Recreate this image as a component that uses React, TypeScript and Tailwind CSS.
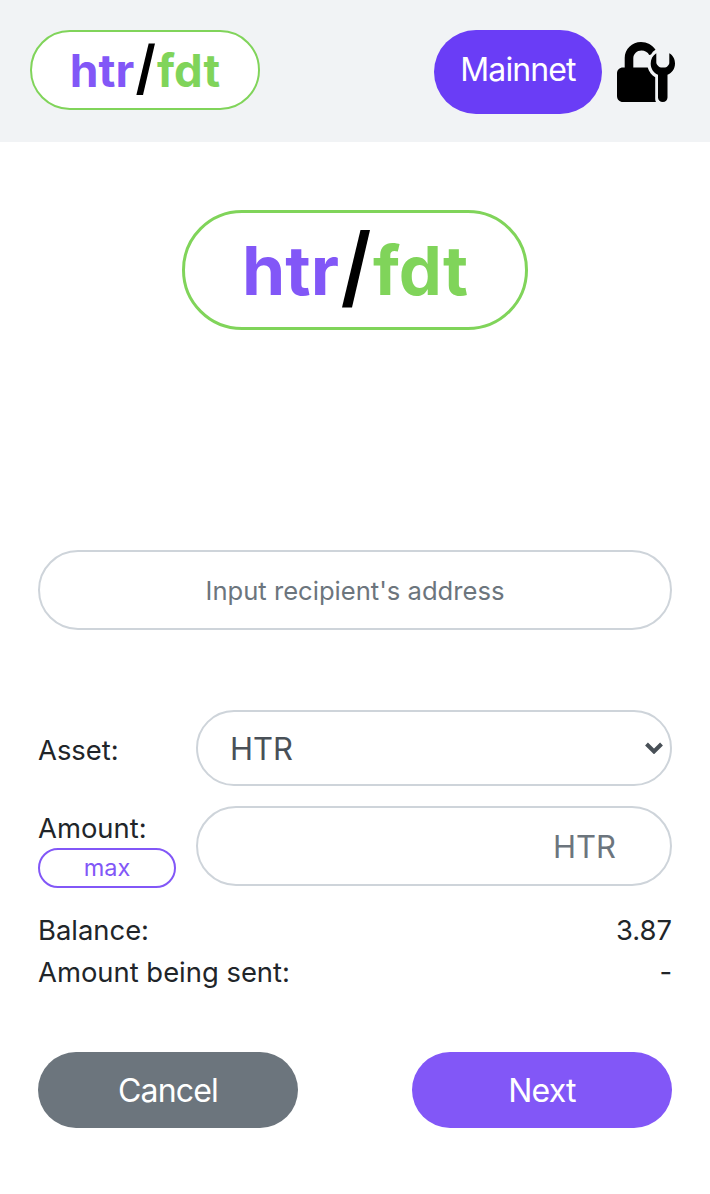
import { useState } from "react";

const ASSETS = ["HTR"];

function Logo({ className }: { className: string }) {
  return (
    <svg viewBox="0 0 346 120" className={className} role="img" aria-label="htr/fdt">
      <rect x="1.5" y="1.5" width="343" height="117" rx="58.5" fill="#fff" stroke="#80d45a" strokeWidth="3" />
      <g fontFamily="Inter, sans-serif" fontWeight="700" fontSize="68">
        <text x="60" y="85" fill="#8257f7" textLength="97" lengthAdjust="spacingAndGlyphs">htr</text>
        <text x="191" y="85" fill="#80d45a" textLength="95" lengthAdjust="spacingAndGlyphs">fdt</text>
      </g>
      <path d="M178.500 20h9.500l-18 77.500h-10z" fill="#000" />
    </svg>
  );
}

function UnlockToolIcon() {
  return (
    <svg viewBox="0 0 58 60" className="h-[60px] w-[58px]" fill="#000">
      <path d="M7.700 25.500V16C7.700 7 15 0 24 0c6 0 11.400 3 14.500 7.700-2 1.200-3.500 2.800-4.500 4.900l-1.800.4C30.800 10.200 27.800 8.500 24.500 8.500c-4.500 0-8.200 3.500-8.200 8v9h14.400c1.300 4.300 3.900 7.800 7.500 9.800V57c0 1.200.3 2.200.8 3H6c-3.500 0-6-2.500-6-6V31.500c0-3.500 2.500-6 6-6z" />
      <path d="M39.300 11.200v9.300c0 1 .3 1.700 1 2.400l1.700 1.800c.6.600 1.200.8 2 .8h4c.8 0 1.400-.2 2-.8l1.500-1.600c.6-.7.800-1.400.8-2.300v-9.600c3.600 2 5.700 5.800 5.700 10.300 0 5.300-3 9.500-7.500 11.300V55.500c0 2.700-2 4.500-4.700 4.500s-4.800-1.800-4.800-4.500V32.800c-4.400-1.800-7.300-6-7.300-11.200 0-4.500 2-8.300 5.600-10.400z" />
    </svg>
  );
}

export default function App() {
  const [address, setAddress] = useState("");
  const [asset, setAsset] = useState("HTR");
  const [amount, setAmount] = useState("");

  return (
    <div className="min-h-[1194px] bg-white font-['Inter',sans-serif] text-[#212529]">
      <header className="flex h-[142px] items-start justify-between bg-[#f1f3f5] pt-[30px] pr-[35px] pl-[30px]">
        <Logo className="h-20 w-[230px]" />
        <div className="flex items-start gap-[15px]">
          <button className="h-[84px] w-[168px] rounded-full bg-[#6a3df6] pb-[5px] text-[32px] tracking-[-0.9px] text-white">Mainnet</button>
          <div className="pt-3">
            <UnlockToolIcon />
          </div>
        </div>
      </header>

      <main className="px-[38px] pt-[68px]">
        <Logo className="mx-auto h-[120px] w-[346px]" />

        <input
          value={address}
          onChange={e => setAddress(e.target.value)}
          placeholder="Input recipient's address"
          className="mt-[220px] block h-20 w-full rounded-full border-2 border-[#ced4da] text-center text-[25.6px] placeholder:text-[#6c757d]"
        />

        <div className="mt-20 grid grid-cols-[138px_1fr] gap-x-5 gap-y-5">
          <label className="pt-[19px] text-[27.4px] leading-[42px]">Asset:</label>
          <div className="relative">
            <select
              value={asset}
              onChange={e => setAsset(e.target.value)}
              className="block h-[76px] w-full appearance-none rounded-full border-2 border-[#ced4da] bg-white pt-[2px] pl-[32px] text-[31px] text-[#495057]"
            >
              {ASSETS.map(a => <option key={a}>{a}</option>)}
            </select>
            <svg viewBox="0 0 18 12" className="pointer-events-none absolute top-8 right-[9px] h-3 w-[18px]">
              <path d="M1.500 2l7.500 7.500L16.500 2" fill="none" stroke="#495057" strokeWidth="4" />
            </svg>
          </div>

          <div>
            <label className="block h-[42px] text-[27.4px] leading-[45px]">Amount:</label>
            <button className="h-10 w-full rounded-full border-2 border-[#8257f7] text-[23.5px] leading-none text-[#8257f7]">max</button>
          </div>
          <input
            value={amount}
            onChange={e => setAmount(e.target.value)}
            placeholder={asset}
            className="block h-20 w-full min-w-0 rounded-full border-2 border-[#ced4da] pr-[54px] text-right text-[31px] placeholder:text-[#6c757d]"
          />
        </div>

        <div className="mt-[21px] text-[27.4px] leading-[42px]">
          <div className="flex justify-between"><span>Balance:</span><span>3.87</span></div>
          <div className="flex justify-between"><span>Amount being sent:</span><span>-</span></div>
        </div>

        <div className="mt-[59px] flex justify-between text-[32px] tracking-[-0.8px] text-white">
          <button className="h-[76px] w-[260px] rounded-full bg-[#6c757d] pt-[2px]">Cancel</button>
          <button className="h-[76px] w-[260px] rounded-full bg-[#8257f7] pt-[2px]">Next</button>
        </div>
      </main>
    </div>
  );
}
